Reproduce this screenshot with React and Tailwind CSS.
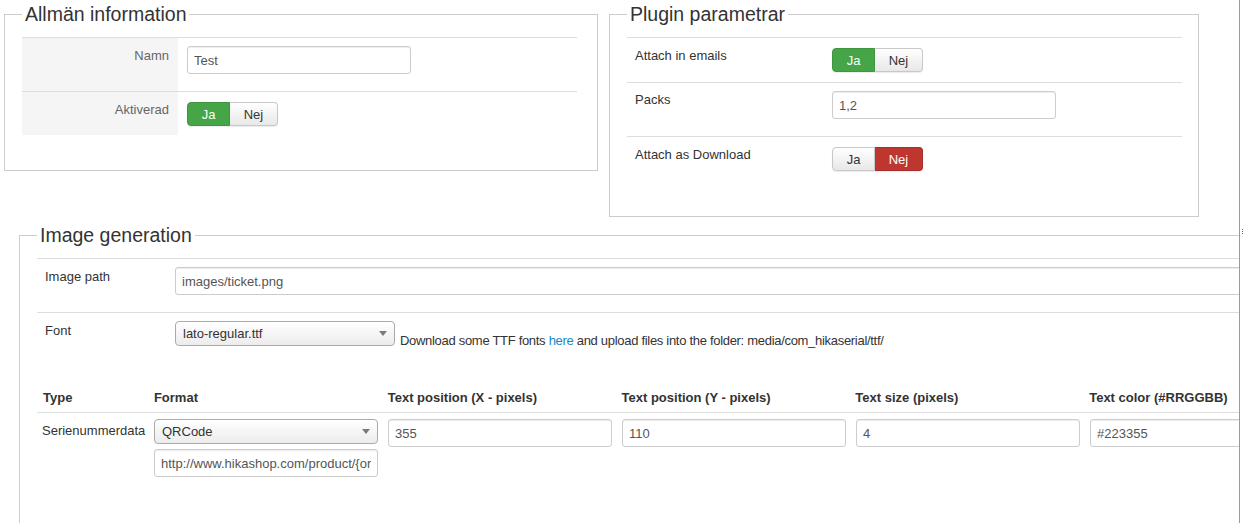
import React from 'react';

const inputCls =
  'h-[28px] w-[224px] border border-[#ccc] rounded-[3px] bg-white px-[6px] text-[13px] text-[#555] shadow-[inset_0_1px_1px_rgba(0,0,0,0.075)] outline-none';

const TextInput = ({ value, className = '' }) => (
  <input readOnly defaultValue={value} className={`${inputCls} ${className}`} />
);

const Select = ({ value, className = '' }) => (
  <div
    className={`h-[25px] flex items-center justify-between border border-[#aaa] rounded-[4px] bg-linear-to-b from-white to-[#ececec] pl-[7px] pr-[7px] text-[13px] text-[#333] ${className}`}
  >
    <span>{value}</span>
    {/* small dropdown caret */}
    <svg width="8" height="5" viewBox="0 0 8 5">
      <path d="M0 0h8L4 5z" fill="#7a7a7a" />
    </svg>
  </div>
);

// Ja / Nej radio switch
const Toggle = ({ on }) => (
  <div className="inline-flex h-[24px] text-[13px] leading-none shadow-[0_1px_1px_rgba(0,0,0,0.08)] rounded-[4px]">
    <span
      className={
        on
          ? 'w-[43px] flex items-center justify-center rounded-l-[4px] border border-[#3f963f] bg-[#46a546] text-white'
          : 'w-[43px] flex items-center justify-center rounded-l-[4px] border border-[#c8c8c8] bg-linear-to-b from-white to-[#e8e8e8] text-[#333]'
      }
    >
      Ja
    </span>
    <span
      className={
        on
          ? 'w-[48px] flex items-center justify-center rounded-r-[4px] border border-l-0 border-[#c8c8c8] bg-linear-to-b from-white to-[#e8e8e8] text-[#333]'
          : 'w-[48px] flex items-center justify-center rounded-r-[4px] border border-l-0 border-[#a8302a] bg-[#bd362f] text-white'
      }
    >
      Nej
    </span>
  </div>
);

const Legend = ({ children }) => (
  <legend className="px-[3px] text-[19.5px] leading-[24px] text-[#333]">{children}</legend>
);

const GrayRow = ({ label, children, pb }) => (
  <div className="flex border-t border-[#ddd]">
    <div className="w-[156px] bg-[#f5f5f5] pr-[9px] pt-[9px] text-right text-[#666]">{label}</div>
    <div className={`pl-[9px] pt-[8px] ${pb}`}>{children}</div>
  </div>
);

const PlainRow = ({ label, labelW, children, className = '' }) => (
  <div className={`flex items-start border-t border-[#ddd] pt-[8px] ${className}`}>
    <div className={`${labelW} pl-[8px] shrink-0 text-[#333]`}>{label}</div>
    <div className="flex">{children}</div>
  </div>
);

const columns = [
  { title: 'Text position (X - pixels)', value: '355' },
  { title: 'Text position (Y - pixels)', value: '110' },
  { title: 'Text size (pixels)', value: '4' },
  { title: 'Text color (#RRGGBB)', value: '#223355' },
];

export default function App() {
  return (
    <div className="flex h-[523px] w-[1244px] bg-white font-['Liberation_Sans',Arial,sans-serif] text-[13px] leading-[18px] overflow-hidden">
      <div className="w-[1239px] shrink-0 overflow-hidden pt-[2px]">
        {/* top row: general info + plugin params */}
        <div className="flex items-start pl-[4px] gap-[11px]">
          <fieldset className="w-[594px] min-w-0 border border-[#ccc] pl-[17px] pr-[20px] pb-[35px]">
            <Legend>Allmän information</Legend>
            <div className="mt-[11px]">
              <GrayRow label="Namn" pb="pb-[17px]">
                <TextInput value="Test" />
              </GrayRow>
              <GrayRow label="Aktiverad" pb="pb-[9px]">
                <div className="mt-[2px]">
                  <Toggle on />
                </div>
              </GrayRow>
            </div>
          </fieldset>

          <fieldset className="w-[590px] min-w-0 border border-[#ccc] pl-[17px] pr-[16px] pb-[35px]">
            <Legend>Plugin parametrar</Legend>
            <div className="mt-[11px]">
              <PlainRow label={<div className="pt-[1px]">Attach in emails</div>} labelW="w-[205px]" className="pb-[10px]">
                <div className="mt-[2px]">
                  <Toggle on />
                </div>
              </PlainRow>
              <PlainRow label="Packs" labelW="w-[205px]" className="pb-[17px]">
                <TextInput value="1,2" />
              </PlainRow>
              <PlainRow label={<div className="pt-[1px]">Attach as Download</div>} labelW="w-[205px]" className="pb-[10px]">
                <div className="mt-[2px]">
                  <Toggle on={false} />
                </div>
              </PlainRow>
            </div>
          </fieldset>
        </div>

        {/* image generation */}
        <fieldset className="ml-[19px] mt-[6px] w-[1300px] min-w-0 h-[340px] border border-[#ccc] pl-[17px]">
          <Legend>Image generation</Legend>
          <div className="mt-[11px]">
            <PlainRow label={<div className="pt-[1px]">Image path</div>} labelW="w-[138px]" className="pb-[17px]">
              <TextInput value="images/ticket.png" className="w-[1100px]" />
            </PlainRow>
            <PlainRow label={<div className="pt-[1px]">Font</div>} labelW="w-[138px]" className="h-[72px]">
              <div className="flex items-end">
                <Select value="lato-regular.ttf" className="w-[220px]" />
                <span className="ml-[5px] -mb-[4px] whitespace-nowrap tracking-[-0.3px] text-[#333]">
                  Download some TTF fonts <span className="text-[#1a86c8]">here</span> and upload files into the
                  folder: media/com_hikaserial/ttf/
                </span>
              </div>
            </PlainRow>

            {/* serial data table */}
            <div className="flex h-[29px] items-center border-b border-[#ddd] font-bold text-[#333]">
              <div className="w-[112px] px-[6px]">Type</div>
              <div className="w-[234px] px-[5px]">Format</div>
              {columns.map((c) => (
                <div key={c.title} className="w-[234px] px-[5px] whitespace-nowrap">
                  {c.title}
                </div>
              ))}
            </div>
            <div className="flex pt-[6px] text-[#333]">
              <div className="w-[112px] px-[5px] pt-[3px]">Serienummerdata</div>
              <div className="w-[234px] px-[5px] flex flex-col gap-[5px]">
                <Select value="QRCode" className="w-[224px]" />
                <TextInput value="http://www.hikashop.com/product/{order_number}" />
              </div>
              {columns.map((c) => (
                <div key={c.title} className="w-[234px] px-[5px]">
                  <TextInput value={c.value} className="h-[27px]" />
                </div>
              ))}
            </div>
          </div>
        </fieldset>
      </div>

      {/* window edge with resize grip */}
      <div className="flex-1 border-l border-[#9a9a9a] pt-[229px] pl-[2px]">
        <div className="flex flex-col gap-[1px]">
          <span className="h-[1px] w-[1px] bg-[#666]" />
          <span className="h-[1px] w-[1px] bg-[#666]" />
          <span className="h-[1px] w-[1px] bg-[#666]" />
        </div>
      </div>
    </div>
  );
}
